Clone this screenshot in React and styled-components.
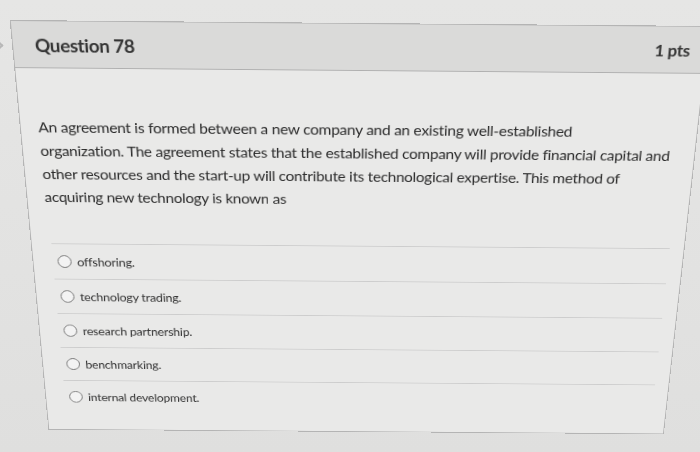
/*========== EXTERNAL MODULES ==========*/
import * as React from 'react';
import styled, {createGlobalStyle} from 'styled-components';


/*========== DATA ==========*/
// question text keeps the line breaks it was pasted with
const QUESTION_LINES = [
  'An agreement is formed between a new company and an existing well-established',
  'organization. The agreement states that the established company will provide financial capital and',
  'other resources and the start-up will contribute its technological expertise. This method of',
  'acquiring new technology is known as',
];

const ANSWERS = [
  'offshoring.',
  'technology trading.',
  'research partnership.',
  'benchmarking.',
  'internal development.',
];

function App() {
  /*----- RENDERER -----*/
  return (
    <Page>
      <GlobalStyle />
      <Edge />
      <Card>
        <Header>
          <Title>Question 78</Title>
          <Points>1 pts</Points>
        </Header>
        <Body>
          <Prompt>
            {QUESTION_LINES.map(line => <Line key={line}>{line}</Line>)}
          </Prompt>
          <Answers>
            {ANSWERS.map(answer => (
              <Answer key={answer}>
                <Radio />
                <AnswerText>{answer}</AnswerText>
              </Answer>
            ))}
          </Answers>
        </Body>
      </Card>
    </Page>
  )
}


/*========== EXPORTS ==========*/
export default App;


/*========== STYLES ==========*/
const GlobalStyle = createGlobalStyle`
  html, body {
    margin: 0;
    overflow: hidden;
    background: #e3e3e3;
  }
  body {
    font-family: Lato, "Liberation Sans", sans-serif;
    color: #2e2e2e;
  }
`;

const Page = styled.div`
  position: relative;
  width: 700px;
  height: 452px;
  padding: 23px 0 0 10px;
  box-sizing: border-box;
  background: linear-gradient(180deg, #e6e6e5 0%, #e2e2e1 60%, #dfdfde 100%);
`;

/* half-hidden chevron of the side nav, cut by the window edge */
const Edge = styled.span`
  position: absolute;
  left: -5px;
  top: 42px;
  width: 5px;
  height: 5px;
  border-top: 2px solid #b8b8b8;
  border-right: 2px solid #b8b8b8;
  transform: rotate(45deg);
`;

const Card = styled.div`
  width: 698px;
  border: 1px solid #b4b4b4;
  background: #e9e9e8;
  transform-origin: 350px 0;
  transform: perspective(800px) rotateX(-13.3deg) rotate(0.5deg);
`;

const Header = styled.div`
  height: 48px;
  display: flex;
  align-items: center;
  justify-content: space-between;
  padding: 0 16px 0 22px;
  background: #dadad9;
  border-bottom: 1px solid #b0b0b0;
`;

const Title = styled.span`
  font-size: 19px;
  font-weight: 700;
  letter-spacing: -0.4px;
  color: #353535;
`;

const Points = styled.span`
  font-size: 17px;
  font-weight: 700;
  letter-spacing: -0.3px;
  color: #353535;
`;

const Body = styled.div`
  padding: 50px 16px 22px 18px;
`;

const Prompt = styled.p`
  margin: 0;
  font-size: 16px;
  letter-spacing: -0.28px;
  line-height: 26px;
  color: #2c2c2c;
`;

const Line = styled.span`
  display: block;
  white-space: nowrap;
`;

const Answers = styled.div`
  margin: 41px -1px 0 3px;
`;

const Answer = styled.div`
  height: 42px;
  display: flex;
  align-items: center;
  gap: 6px;
  padding-left: 5px;
  border-top: 1px solid #cdcdcd;
  box-sizing: border-box;
`;

const Radio = styled.span`
  width: 13px;
  height: 13px;
  border-radius: 50%;
  border: 1px solid #707070;
  background: #f3f3f3;
`;

const AnswerText = styled.span`
  font-size: 13.5px;
  letter-spacing: -0.2px;
  color: #333;
`;
